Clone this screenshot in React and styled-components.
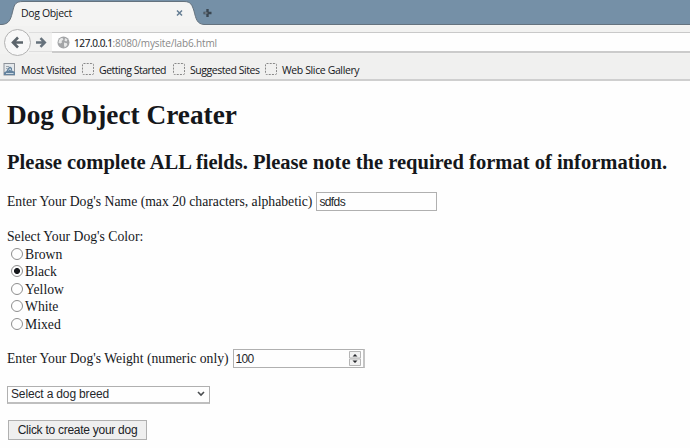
import React, { useState } from "react";
import styled, { createGlobalStyle } from "styled-components";

const GlobalStyle = createGlobalStyle`
  * { box-sizing: border-box; }
  body { margin: 0; background: #fff; overflow: hidden; }
`;

const Window = styled.div`
  width: 690px;
  height: 448px;
  background: #fefefe;
  color: #15171b;
  overflow: hidden;
`;

const TabStrip = styled.div`
  position: relative;
  height: 26px;
  background: #7590a7;
  font: 10.5px/27px "Open Sans", sans-serif;
`;

const TabShape = styled.svg`
  position: absolute;
  inset: 0;
`;

const TabTitle = styled.span`
  position: absolute;
  left: 21px;
  top: 0;
  white-space: nowrap;
  letter-spacing: ${(p) => p.$track}px;
`;

const NavBar = styled.div`
  position: relative;
  display: flex;
  height: 28px;
  padding: 6px 0 1px 52px;
  background: #f2f2f1;
`;

const NavButtons = styled.svg`
  position: absolute;
  left: 0;
  top: 0;
`;

const AddressBar = styled.div`
  display: flex;
  align-items: center;
  flex: 1;
  gap: 4px;
  padding: 0 0 0 5px;
  background: #fefefe;
  border-top: 1px solid #c9c9c9;
  border-bottom: 2px solid #cbcbcb;
  font: 10px/18px "Open Sans", sans-serif;
  color: #888;
  white-space: nowrap;
`;

const Url = styled.span`
  padding-top: 1px;
  letter-spacing: -0.15px;
  b { font-weight: 400; color: #191b1f; -webkit-text-stroke: 0.15px; letter-spacing: -0.4px; }
`;

const Bookmarks = styled.div`
  display: flex;
  height: 27px;
  padding: 2px 0 0 3px;
  background: #f0f0ef;
  border-bottom: 2px solid #cfcfcf;
`;

const Bookmark = styled.div`
  display: flex;
  align-items: center;
  gap: 5px;
  width: ${(p) => p.$width}px;
  height: 25px;
  margin-top: 1px;
  font: 10.5px/24px "Open Sans", sans-serif;
  letter-spacing: ${(p) => p.$track}px;
  white-space: nowrap;
  svg { flex: none; margin-top: -1px; }
`;

const Page = styled.main`
  padding: 0 7px;
  font: 13.7px/20px "Liberation Serif", "Times New Roman", serif;
`;

const Title = styled.h1`
  margin: 0;
  padding-top: 17px;
  font-size: 27.3px;
  line-height: 34px;
`;

const Subtitle = styled.h2`
  margin: 13px 0 0;
  font-size: 20.55px;
  line-height: 34px;
  white-space: nowrap;
`;

const Row = styled.div`
  display: flex;
  align-items: center;
  gap: 4px;
  height: 20px;
  margin-top: ${(p) => p.$gap}px;
  white-space: nowrap;
`;

const Label = styled.label`
  padding-top: ${(p) => p.$drop || 0}px;
`;

const TextInput = styled.input`
  width: 121px;
  height: 19px;
  padding: 2px 2px 0;
  border: 1px solid #b0b0b0;
  border-radius: 0;
  background: #fefefe;
  color: #25272b;
  outline: 0;
  font: 12px "Liberation Sans", Arial, sans-serif;
  letter-spacing: -0.6px;
`;

const NumberBox = styled.div`
  display: flex;
  align-items: center;
  width: 132px;
  height: 19px;
  padding-right: 2px;
  border: 1px solid #b0b0b0;
  border-right: 2px solid #c4c4c4;
`;

const NumberInput = styled.input`
  flex: 1;
  min-width: 0;
  padding: 1px 2px 0;
  border: 0;
  background: none;
  color: #25272b;
  outline: 0;
  font: 12px "Liberation Sans", Arial, sans-serif;
  letter-spacing: -0.7px;
`;

const RadioRow = styled.label`
  display: flex;
  align-items: center;
  gap: 2px;
  height: 17.5px;
  padding-left: 4px;
`;

const Radio = styled.input`
  appearance: none;
  width: 12px;
  height: 12px;
  margin: -2px 0 0;
  border: 1px solid #8e8e8e;
  border-radius: 50%;
  background: #fefefe;
  &:checked { background: radial-gradient(circle, #17191d 0 2.6px, #fefefe 3.4px); }
`;

const SelectBox = styled.button`
  display: flex;
  align-items: center;
  justify-content: space-between;
  width: 203px;
  height: 18px;
  margin-top: -2px;
  padding: 0 4px 0 3px;
  border: 1px solid #b0b0b0;
  border-bottom: 2px solid #bfbfbf;
  border-radius: 0;
  background: #fefefe;
  color: #25272b;
  font: 12px/14px "Liberation Sans", Arial, sans-serif;
  letter-spacing: -0.15px;
`;

const SubmitButton = styled.button`
  width: 139px;
  height: 20px;
  margin: -2px 0 0 1px;
  padding: 0;
  border: 1px solid #b0b0b0;
  border-radius: 0;
  background: #efefef;
  color: #202226;
  font: 12px/16px "Liberation Sans", Arial, sans-serif;
  letter-spacing: -0.27px;
  white-space: nowrap;
`;

const PlaceholderIcon = () => (
  <svg width="12" height="12" viewBox="0 0 12 12">
    <rect x=".5" y=".5" width="11" height="11" rx="1" fill="none" stroke="#888" strokeDasharray="2 1.2" />
  </svg>
);

const MostVisitedIcon = () => (
  <svg width="13" height="13" viewBox="0 0 13 13">
    <rect x="1" y=".5" width="10.5" height="11.5" fill="#e4e8eb" stroke="#8d9299" />
    <path d="M3 3.5h3M3 5.5h1.5" stroke="#9ba4ac" />
    <path d="M1 12V9.5L3.500 8 5 5 7 3.500 9 5v2.500l3 1.500V12Z" fill="#64839e" />
    <path d="M5.500 7.500 7 5.500 8 7.500M3 10.500h7.500" fill="none" stroke="#cbd8e2" />
  </svg>
);

const GlobeIcon = () => (
  <svg width="13" height="13" viewBox="0 0 13 13">
    <circle cx="6.5" cy="6.5" r="6" fill="#a3a5a7" />
    <path d="m2 4 2-2 2 .2.3 1.6L4.5 5l.7 1.2L3.5 7.5 1.5 7ZM8 2l2.5 1.5-1 2-2-.8ZM7 6.5l3 .7.3 1.8-2.5 2.5L7 9.5Z" fill="#e7e8e8" />
  </svg>
);

const bookmarks = [
  { text: "Most Visited", width: 79, track: -0.4, icon: <MostVisitedIcon /> },
  { text: "Getting Started", width: 91, track: -0.48 },
  { text: "Suggested Sites", width: 92, track: -0.46 },
  { text: "Web Slice Gallery", width: 110, track: -0.38 },
];

const colors = ["Brown", "Black", "Yellow", "White", "Mixed"];

export default function App() {
  const [color, setColor] = useState("Black");
  const [name, setName] = useState("sdfds");
  const [weight, setWeight] = useState("100");
  return (
    <Window>
      <GlobalStyle />
      <TabStrip>
        <TabShape width="690" height="26">
          <path d="M0 24.5H2C10 24 11 18 13 10C14.500 4 16 1.500 23 1.500H184C191 1.500 192 5 194 11C196 19 197 24 204 24.500H690V26H0Z" fill="#f4f4f3" />
          <path d="M0 24.500H2C10 24 11 18 13 10C14.500 4 16 1.500 23 1.500H184C191 1.500 192 5 194 11C196 19 197 24 204 24.500H690" fill="none" stroke="#64727e" />
          <path d="m177 10.500 5 5m0-5-5 5" stroke="#647d93" strokeWidth="1.500" />
          <path d="M203.500 13h8M207.500 9v8" stroke="#3a4651" strokeWidth="2.400" />
          <path d="M204.500 13h3" stroke="#a3adb6" strokeWidth=".9" />
        </TabShape>
        <TabTitle $track={-0.35}>Dog Object</TabTitle>
      </TabStrip>
      <NavBar>
        <NavButtons width="52" height="30">
          <path d="M29 6.500H52M29 25.500H52" stroke="#dedede" />
          <circle cx="17.500" cy="16.500" r="13" fill="#f8f8f8" stroke="#b2b2b2" />
          <path d="M23 16.500H13.500M18 11.500l-5 5 5 5" fill="none" stroke="#5b646b" strokeWidth="2.600" />
          <path d="M36 16.500h8M40.500 12.200l4.300 4.300-4.300 4.300" fill="none" stroke="#65717b" strokeWidth="2.500" />
        </NavButtons>
        <AddressBar>
          <GlobeIcon />
          <Url><b>127.0.0.1</b>:8080/mysite/lab6.html</Url>
        </AddressBar>
      </NavBar>
      <Bookmarks>
        {bookmarks.map((b) => (
          <Bookmark key={b.text} $width={b.width} $track={b.track}>
            {b.icon || <PlaceholderIcon />}
            <span>{b.text}</span>
          </Bookmark>
        ))}
      </Bookmarks>
      <Page>
        <Title>Dog Object Creater</Title>
        <Subtitle>Please complete ALL fields. Please note the required format of information.</Subtitle>
        <Row $gap={12}>
          <Label htmlFor="name" $drop={2}>Enter Your Dog's Name (max 20 characters, alphabetic)</Label>
          <TextInput id="name" maxLength={20} value={name} onChange={(e) => setName(e.target.value)} />
        </Row>
        <Row $gap={15}><Label as="span" $drop={2}>Select Your Dog's Color:</Label></Row>
        {colors.map((c) => (
          <RadioRow key={c}>
            <Radio type="radio" name="color" checked={color === c} onChange={() => setColor(c)} />
            {c}
          </RadioRow>
        ))}
        <Row $gap={15}>
          <Label htmlFor="weight">Enter Your Dog's Weight (numeric only)</Label>
          <NumberBox>
            <NumberInput id="weight" value={weight} onChange={(e) => setWeight(e.target.value)} />
            <svg width="12" height="15" viewBox="0 0 12 15">
              <path d="M.5.500h11v6.500H.5ZM.5 8h11v6.500H.5Z" fill="#f1f1f1" stroke="#b5b5b5" />
              <path d="M3.500 5.500 6 3 8.500 5.500ZM3.500 9.500 6 12 8.500 9.500Z" fill="#25272b" />
            </svg>
          </NumberBox>
        </Row>
        <Row $gap={17}>
          <SelectBox type="button">
            Select a dog breed
            <svg width="8" height="6" viewBox="0 0 8 6">
              <path d="m1 1 3 3 3-3" fill="none" stroke="#4a4d50" strokeWidth="1.600" />
            </svg>
          </SelectBox>
        </Row>
        <Row $gap={15}>
          <SubmitButton type="button">Click to create your dog</SubmitButton>
        </Row>
      </Page>
    </Window>
  );
}
